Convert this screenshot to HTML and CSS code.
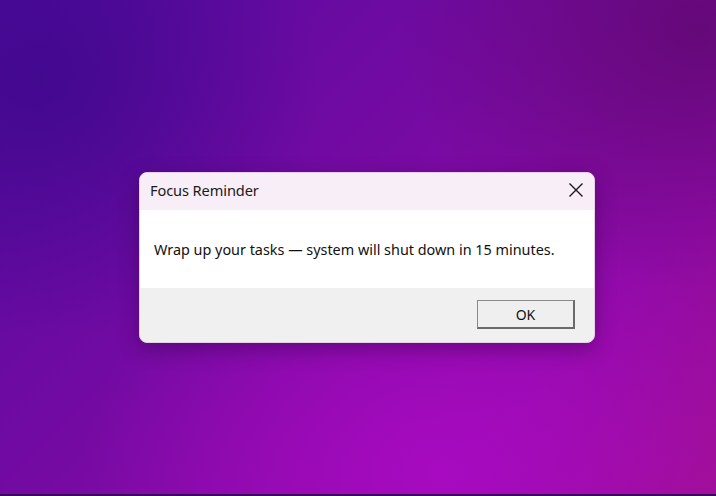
FILE: index.html
```html
<!DOCTYPE html>
<html lang="en">
<head>
<meta charset="utf-8">
<title>Focus Reminder</title>
<link rel="stylesheet" href="styles.css">
</head>
<body>
<div class="desktop">
  <div class="dialog">
    <div class="titlebar">
      <span class="title">Focus Reminder</span>
      <button class="close" aria-label="Close">
        <svg width="16" height="16" viewBox="0 0 16 16"><path d="M1.5 1.5 L14.5 14.5 M14.5 1.5 L1.5 14.5" stroke="#1a1a1a" stroke-width="1.4" fill="none"/></svg>
      </button>
    </div>
    <div class="message">Wrap up your tasks — system will shut down in 15 minutes.</div>
    <div class="footer">
      <button class="ok">OK</button>
    </div>
  </div>
</div>
</body>
</html>
```
FILE: styles.css
```css
* { box-sizing: border-box; }
html, body { margin: 0; padding: 0; width: 716px; height: 496px; overflow: hidden; }
body { font-family: "Noto Sans", "Open Sans", sans-serif; }
.desktop {
  width: 716px;
  height: 496px;
  padding: 172px 0 0 139px;
  background:
    radial-gradient(ellipse 360px 260px at 440px 470px, rgba(170,10,195,0.9), rgba(170,10,195,0) 100%),
    radial-gradient(ellipse 280px 260px at 40px 80px, rgba(55,8,135,0.7), rgba(55,8,135,0) 100%),
    radial-gradient(ellipse 300px 260px at 700px 30px, rgba(90,8,105,0.75), rgba(90,8,105,0) 100%),
    linear-gradient(135deg, #540aa0 0%, #720aa2 40%, #900aa8 75%, #a0108e 100%);
  border-bottom: 2px solid #3a0a5a;
}
.dialog {
  width: 456px;
  height: 171px;
  border-radius: 8px;
  overflow: hidden;
  display: flex;
  flex-direction: column;
  border: 1px solid #e8cfe8;
  box-shadow: 0 6px 20px rgba(40,0,60,0.4);
  background: #f0f0f0;
}
.titlebar {
  height: 37px;
  background: #f7eef7;
  display: flex;
  align-items: center;
  justify-content: space-between;
  padding: 0 10px 3px 10px;
}
.title {
  font-size: 14.6px;
  color: #1a1a1a;
  letter-spacing: -0.1px;
}
.close {
  border: 0;
  background: transparent;
  padding: 0;
  width: 16px;
  height: 16px;
  display: flex;
}
.message {
  height: 78px;
  background: #ffffff;
  padding: 30px 0 0 14px;
  font-size: 14.4px;
  color: #111;
}
.footer {
  flex: 1;
  display: flex;
  justify-content: flex-end;
  align-items: flex-start;
  padding: 12px 19px 0 0;
}
.ok {
  width: 98px;
  height: 29px;
  font-family: inherit;
  font-size: 14px;
  color: #111;
  background: #efefef;
  border: 1px solid #8a8a8a;
  border-right: 2px solid #6a6a6a;
  border-bottom: 2px solid #6a6a6a;
  padding: 0;
}
```
